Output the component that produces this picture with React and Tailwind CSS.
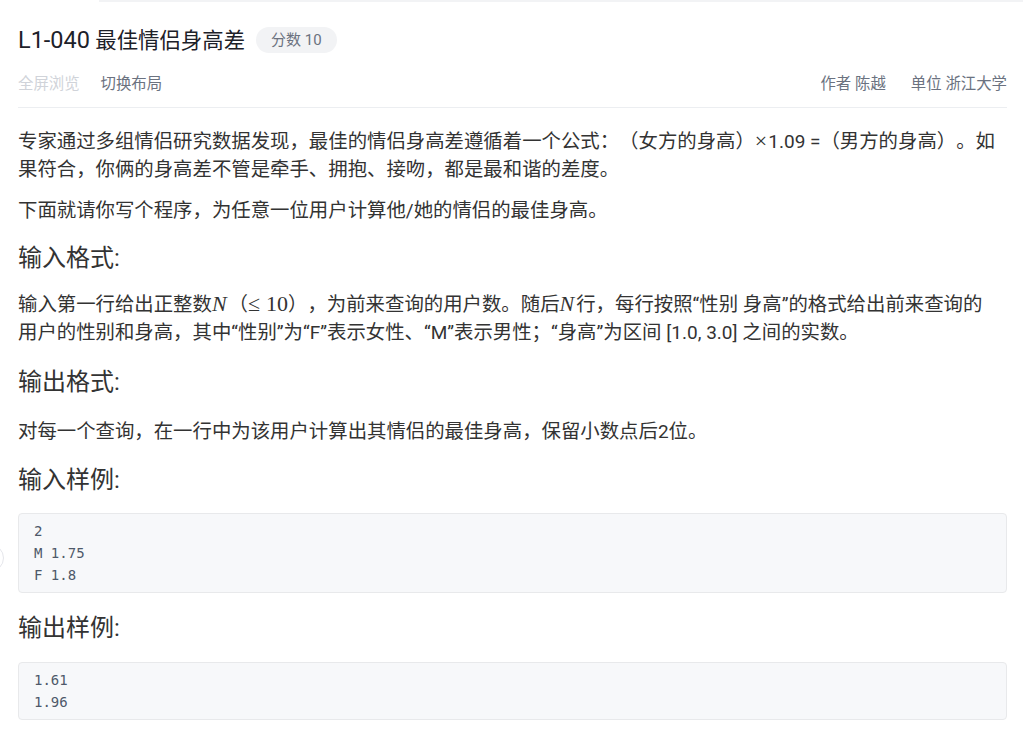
import React from "react";

const SANS = "font-['Roboto','Noto_Sans_CJK_SC',sans-serif]";
const MATH = "font-['Liberation_Serif','DejaVu_Serif',serif] text-[22px] leading-none";
const LAT = "text-[19px] leading-none";

function Heading({ children, className = "" }) {
  return (
    <h3 className={`text-[24px] leading-[28px] text-[#333] font-normal ${className}`}>
      {children}
    </h3>
  );
}

function Para({ children, className = "" }) {
  return <p className={`text-[19.4px] leading-[28px] text-[#333] ${className}`}>{children}</p>;
}

function Line({ children }) {
  return <span className="block whitespace-nowrap">{children}</span>;
}

function CodeBlock({ lines, className = "" }) {
  return (
    <pre
      className={`bg-[#f7f8fa] border border-[#e8e9eb] rounded-[4px] px-[15px] py-[6px] text-[14px] leading-[22px] text-[#4e5969] font-['DejaVu_Sans_Mono','Liberation_Mono',monospace] ${className}`}
    >
      {lines.join("\n")}
    </pre>
  );
}

export default function App() {
  return (
    <div className={`relative w-[1023px] h-[729px] overflow-hidden bg-white [text-spacing-trim:space-all] ${SANS}`}>
      <div className="ml-[99px] h-[2px] bg-[#f2f3f5]" />

      <div className="pl-[18px] pr-[16px]">
        <div className="mt-[24px] flex items-center gap-[11px] h-[28px]">
          <h1 className="text-[21.4px] leading-[28px] text-[#1d2129] font-normal">
            <span className="text-[23.5px]">L1-040</span> 最佳情侣身高差
          </h1>
          <span className="h-[26px] px-[15px] rounded-full bg-[#f2f3f5] text-[15px] leading-[26px] text-[#6b7280]">
            分数 10
          </span>
        </div>

        <div className="mt-[20px] flex items-center justify-between h-[20px] text-[15.4px] leading-[20px]">
          <div className="flex items-center gap-[21px]">
            <span className="text-[#d0d3d9]">全屏浏览</span>
            <span className="text-[#6b7280]">切换布局</span>
          </div>
          <div className="flex items-center gap-[25px] text-[#6b7280]">
            <span>作者 陈越</span>
            <span>单位 浙江大学</span>
          </div>
        </div>

        <div className="mt-[13px] border-b border-[#eceef1]" />

        <div className="pt-[20px]">
          <Para>
            <Line>
              专家通过多组情侣研究数据发现，最佳的情侣身高差遵循着一个公式：（女方的身高）
              <span className={`${MATH} mr-[1px]`}>×</span>
              <span className={LAT}>1.09 =</span>（男方的身高）。如
            </Line>
            <Line>果符合，你俩的身高差不管是牵手、拥抱、接吻，都是最和谐的差度。</Line>
          </Para>
          <Para className="mt-[13px]">
            <Line>
              下面就请你写个程序，为任意一位用户计算他<span className={LAT}>/</span>她的情侣的最佳身高。
            </Line>
          </Para>

          <Heading className="mt-[19px]">输入格式:</Heading>
          <Para className="mt-[19px]">
            <Line>
              输入第一行给出正整数<span className={`${MATH} italic mr-[2px]`}>N</span>（<span className={`${MATH} mr-[6px]`}>≤</span><span className={MATH}>10</span>），为前来查询的用户数。随后<span className={`${MATH} italic mr-[2px]`}>N</span>行，每行按照<span className={LAT}>“</span>性别 身高<span className={LAT}>”</span>的格式给出前来查询的
            </Line>
            <Line>
              用户的性别和身高，其中<span className={LAT}>“</span>性别<span className={LAT}>”</span>为<span className={LAT}>“F”</span>表示女性、<span className={LAT}>“M”</span>表示男性；<span className={LAT}>“</span>身高<span className={LAT}>”</span>为区间 <span className={LAT}>[1.0, 3.0]</span> 之间的实数。
            </Line>
          </Para>

          <Heading className="mt-[21px]">输出格式:</Heading>
          <Para className="mt-[22px]">
            <Line>
              对每一个查询，在一行中为该用户计算出其情侣的最佳身高，保留小数点后<span className={LAT}>2</span>位。
            </Line>
          </Para>

          <Heading className="mt-[20px]">输入样例:</Heading>
          <CodeBlock className="mt-[19px]" lines={["2", "M 1.75", "F 1.8"]} />

          <Heading className="mt-[21px]">输出样例:</Heading>
          <CodeBlock className="mt-[20px]" lines={["1.61", "1.96"]} />
        </div>
      </div>

      <div className="absolute left-[-24px] top-[544px] w-[28px] h-[28px] rounded-full border border-[#e5e6eb] bg-white" />
    </div>
  );
}
